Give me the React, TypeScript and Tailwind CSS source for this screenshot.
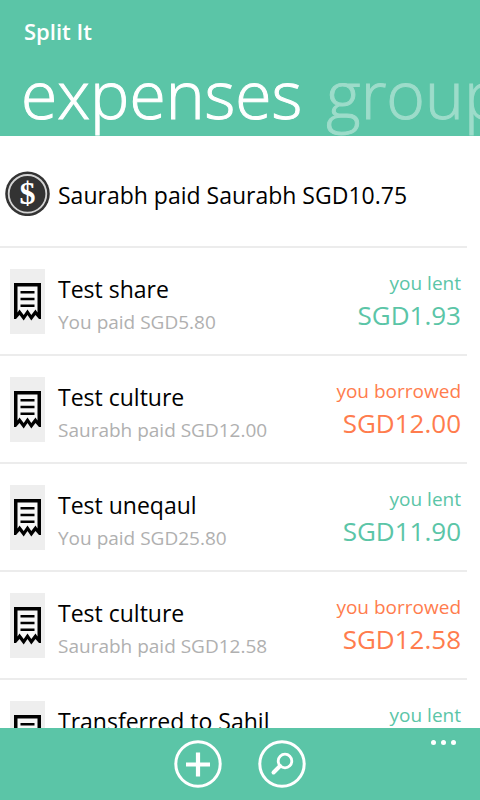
type Kind = 'lent' | 'borrowed';

interface Expense {
  id: number;
  title: string;
  detail: string;
  kind: Kind;
  amount: string;
}

const expenses: Expense[] = [
  { id: 1, title: 'Test share', detail: 'You paid SGD5.80', kind: 'lent', amount: 'SGD1.93' },
  { id: 2, title: 'Test culture', detail: 'Saurabh paid SGD12.00', kind: 'borrowed', amount: 'SGD12.00' },
  { id: 3, title: 'Test uneqaul', detail: 'You paid SGD25.80', kind: 'lent', amount: 'SGD11.90' },
  { id: 4, title: 'Test culture', detail: 'Saurabh paid SGD12.58', kind: 'borrowed', amount: 'SGD12.58' },
  { id: 5, title: 'Transferred to Sahil', detail: 'You paid SGD20.00', kind: 'lent', amount: 'SGD10.00' },
];

function DollarIcon() {
  return (
    <svg className="h-[45px] w-[45px] shrink-0" viewBox="0 0 45 45" aria-hidden="true">
      <circle cx="22.5" cy="22.8" r="22.3" fill="#333" />
      <circle cx="22.5" cy="22.8" r="18.8" fill="none" stroke="#d4d4d4" strokeWidth="1.8" />
      <text
        x="22.5"
        y="33"
        textAnchor="middle"
        fontSize="32"
        fill="#fff"
        className="font-['Liberation_Serif',serif] font-bold"
      >
        $
      </text>
    </svg>
  );
}

function ReceiptIcon() {
  return (
    <svg className="h-[65px] w-[35px] shrink-0 bg-[#eee]" viewBox="0 0 35 65" aria-hidden="true">
      <path
        d="M4 14H31V50H29L25.5 46L21.3 51.5L17.5 46L13.7 51.5L9.5 46L6 50H4Z"
        fill="#000"
      />
      <path
        d="M7.5 17.6H27.5V43.5L25.5 40.5L21.3 46L17.5 40.5L13.7 46L9.5 40.5L7.5 43.5Z"
        fill="#f8f8f8"
      />
      <path d="M10.5 23.3H24.5M10.5 30H24.5M10.5 36.7H24.5" stroke="#000" strokeWidth="2.6" />
    </svg>
  );
}

function ExpenseRow({ expense }: { expense: Expense }) {
  const tone = expense.kind === 'lent' ? 'text-[#5bc5a7]' : 'text-[#ff7c4d]';
  return (
    <li className="flex h-[108px] shrink-0 items-start border-b-2 border-[#ececec] pt-[21px] pr-[6px] pl-[10px]">
      <ReceiptIcon />
      <div className="ml-[13px] min-w-0 flex-1 whitespace-nowrap">
        <p className="pt-1 text-[23px] leading-[32px] text-black">{expense.title}</p>
        <p className="text-[19px] leading-[34px] text-[#b0b0b0]">{expense.detail}</p>
      </div>
      <div className={`text-right whitespace-nowrap ${tone}`}>
        <p className="text-[19px] leading-[28px]">you {expense.kind}</p>
        <p className="text-[26px] leading-[36px]">{expense.amount}</p>
      </div>
    </li>
  );
}

export default function App() {
  return (
    <div className="flex h-screen flex-col overflow-hidden bg-white font-['Open_Sans','Noto_Sans',sans-serif]">
      <header className="h-[136px] shrink-0 overflow-hidden bg-[#5bc5a7] pt-4 text-white">
        <h1 className="pl-6 text-[22px] leading-[30px] font-semibold">Split It</h1>
        <nav className="flex gap-6 pl-[21px] text-[66px] leading-[94px] font-light whitespace-nowrap [-webkit-text-stroke:1px]">
          <button type="button" className="shrink-0">expenses</button>
          <button type="button" className="shrink-0 text-[#9ddcca]">groups</button>
        </nav>
      </header>

      <main className="min-h-0 flex-1 overflow-hidden pr-[13px]">
        <ul className="flex flex-col">
          <li className="flex h-[112px] shrink-0 items-center gap-2 border-b-2 border-[#ececec] pt-1 pl-[5px]">
            <DollarIcon />
            <p className="pt-1 text-[23px] leading-[34px] whitespace-nowrap text-black">
              Saurabh paid Saurabh SGD10.75
            </p>
          </li>
          {expenses.map((expense) => (
            <ExpenseRow key={expense.id} expense={expense} />
          ))}
        </ul>
      </main>

      <footer className="grid h-[72px] shrink-0 grid-cols-[1fr_auto_1fr] bg-[#5bc5a7]">
        <div className="col-start-2 flex gap-9 pt-3">
          <button type="button" aria-label="Add expense" className="h-12 w-12">
            <svg viewBox="0 0 48 48" fill="none" stroke="#fff">
              <circle cx="24" cy="24" r="22.2" strokeWidth="3" />
              <path d="M12 24.5H36M24 12.5V36.5" strokeWidth="4.2" />
            </svg>
          </button>
          <button type="button" aria-label="Search" className="h-12 w-12">
            <svg viewBox="0 0 48 48" fill="none" stroke="#fff">
              <circle cx="24" cy="24" r="22.2" strokeWidth="3" />
              <circle cx="27" cy="21" r="6.8" strokeWidth="2.8" />
              <path d="M22 26L15.5 32.5" strokeWidth="4" strokeLinecap="round" />
            </svg>
          </button>
        </div>
        <button type="button" aria-label="More" className="mr-6 flex h-7 gap-[5px] self-start justify-self-end pt-3">
          <span className="h-[5px] w-[5px] rounded-full bg-white" />
          <span className="h-[5px] w-[5px] rounded-full bg-white" />
          <span className="h-[5px] w-[5px] rounded-full bg-white" />
        </button>
      </footer>
    </div>
  );
}
